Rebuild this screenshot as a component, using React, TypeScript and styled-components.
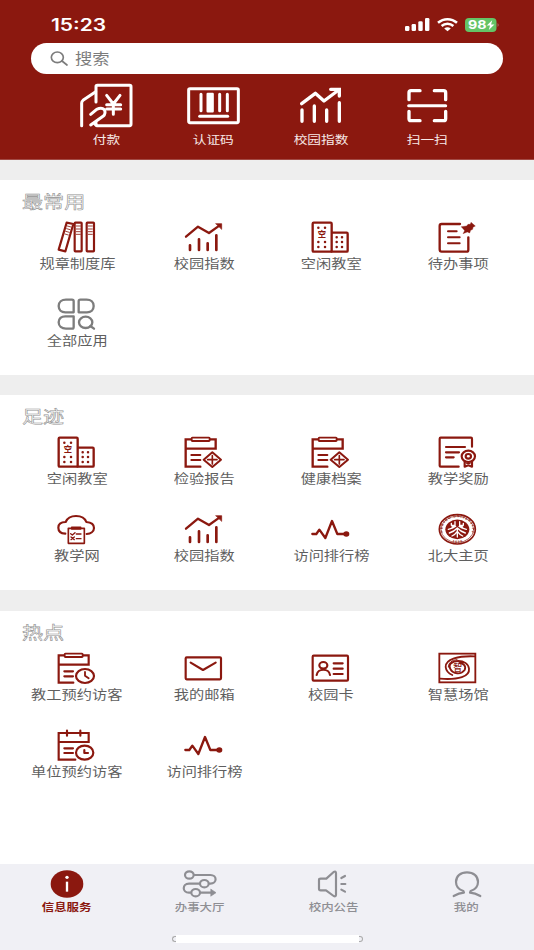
import React from 'react';
import styled, { createGlobalStyle } from 'styled-components';

const RED = '#8b180f';
const CJK = '"Noto Sans CJK SC", "Noto Sans", sans-serif';

const GlobalStyle = createGlobalStyle`
  body { margin: 0; background: #fff; font-family: ${CJK}; }
  * { box-sizing: border-box; }
`;

const Screen = styled.div`
  width: 534px;
  height: 950px;
  display: flex;
  flex-direction: column;
  background: #eeeeee;
  overflow: hidden;
`;

const Header = styled.header`
  height: 160px;
  flex: none;
  background: ${RED};
  border-bottom: 1px solid #a24a44;
`;

const StatusBar = styled.div`
  height: 43px;
  padding: 7px 36px 0 51px;
  display: flex;
  align-items: center;
  justify-content: space-between;
  color: #fff;
`;

const Clock = styled.span`
  display: inline-block;
  font: 600 16.8px/20px Inter, "Liberation Sans", sans-serif;
  transform: scaleX(1.25);
  transform-origin: left center;
`;

const StatusIcons = styled.div`
  display: flex;
  align-items: center;
  gap: 7px;
`;

const SearchBar = styled.div`
  height: 31px;
  margin: 0 31px 0 31px;
  padding-left: 19px;
  display: flex;
  align-items: center;
  gap: 7px;
  border-radius: 17px;
  background: #fff;
  color: #7c7c7c;
`;

const SearchText = styled.span`
  font-size: 14.5px;
  line-height: 20px;
  transform: scaleX(1.19);
  transform-origin: left center;
  margin-top: -1px;
`;

const QuickActions = styled.nav`
  display: grid;
  grid-template-columns: repeat(4, 107px);
  padding: 8px 0 0 53px;
`;

const QuickAction = styled.div`
  display: flex;
  flex-direction: column;
  align-items: center;
  color: #fff;
`;

const QuickLabel = styled.span`
  margin-top: 3px;
  font-size: 11.5px;
  line-height: 16px;
  transform: scaleX(1.19);
  white-space: nowrap;
  color: #f7e8e6;
`;

const Section = styled.section<{ $height: number; $gap?: number }>`
  height: ${(p) => p.$height}px;
  flex: none;
  margin-top: ${(p) => p.$gap ?? 20}px;
  background: #fff;
`;

const SectionTitle = styled.h2`
  height: 42px;
  margin: 0;
  padding: 9px 0 0 22px;
  font: 400 17.3px/24px ${CJK};
  color: #fff;
  -webkit-text-stroke: 0.55px #8f8f8f;

  span {
    display: inline-block;
    transform: scaleX(1.22);
    transform-origin: left center;
  }
`;

const AppGrid = styled.div`
  display: grid;
  grid-template-columns: repeat(4, 127px);
  grid-auto-rows: 77px;
  padding-left: 13.5px;
`;

const AppTile = styled.div<{ $muted?: boolean }>`
  display: flex;
  flex-direction: column;
  align-items: center;
  color: ${(p) => (p.$muted ? '#7d7d7d' : RED)};
`;

const AppLabel = styled.span`
  font-size: 12.6px;
  line-height: 18px;
  transform: scaleX(1.21);
  white-space: nowrap;
  color: #5f5f5f;
`;

const TabBar = styled.footer`
  flex: 1;
  display: flex;
  flex-direction: column;
  background: #f0f0f5;
`;

const Tabs = styled.div`
  display: grid;
  grid-template-columns: repeat(4, 133.3px);
  padding-top: 5px;
`;

const Tab = styled.div<{ $active?: boolean }>`
  display: flex;
  flex-direction: column;
  align-items: center;
  color: ${(p) => (p.$active ? RED : '#8e8e93')};
  font-weight: ${(p) => (p.$active ? 700 : 500)};
`;

const TabLabel = styled.span`
  font-size: 10.3px;
  line-height: 16px;
  transform: scaleX(1.21);
  white-space: nowrap;
`;

const HomeIndicator = styled.div`
  width: 191px;
  height: 8px;
  margin: 20px auto 0;
  display: flex;
  justify-content: space-between;
  align-items: center;
`;

const IndicatorBar = styled.div`
  flex: 1;
  height: 8px;
  background: #fff;
`;

const IndicatorEnd = styled.div<{ $right?: boolean }>`
  width: 4px;
  height: 6px;
  border: 1px solid #aaa;
  border-radius: ${(p) => (p.$right ? '0 4px 4px 0' : '4px 0 0 4px')};
  ${(p) => (p.$right ? 'border-left: 0;' : 'border-right: 0;')}
`;

const Svg = styled.svg`
  display: block;
  flex: none;
  overflow: visible;
  fill: none;
  stroke: currentColor;
  stroke-linecap: round;
  stroke-linejoin: round;
`;

const Glyph = styled.text`
  font-family: ${CJK};
  fill: currentColor;
  stroke: none;
  text-anchor: middle;
`;

/* App icons share a 114 x 96 grid shown at 38 x 32. */
const AppIcon = ({ children, w = 6 }: { children: React.ReactNode; w?: number }) => (
  <Svg width="38" height="32" viewBox="1 1 114 96" strokeWidth={w}>
    {children}
  </Svg>
);

const Books = () => (
  <AppIcon w={6.5}>
    <path d="M27 3 47 7 23 89 3 84Z" />
    <rect x="51" y="3" width="21" height="86" rx="2" />
    <rect x="87" y="3" width="22" height="86" rx="2" />
    <path d="M29 13 40 16M27 21 37 24M24 29 35 32M22 37 32 40M56 13H68M56 22H68M56 30H68M56 38H68M92 13H104M92 22H104M92 30H104M92 38H104" strokeWidth="2.5" />
  </AppIcon>
);

const Chart = () => (
  <AppIcon w={7}>
    <path d="M4 45 40 15 73 34 104 12" />
    <path d="M94 6H111V22Z" fill="currentColor" strokeWidth="2" />
    <path d="M16 71V85M43 53V85M69 65V85M95 41V85" strokeWidth="8" />
  </AppIcon>
);

const Building = () => (
  <AppIcon w={7}>
    <rect x="3" y="3" width="57" height="87" rx="3" />
    <path d="M62 33H105Q108 33 108 36V87Q108 90 105 90H60" />
    <path d="M20 18H20.1M40 18H40.1M20 61H20.1M40 61H40.1M20 76H20.1M40 76H40.1M75 47H75.1M91 47H91.1M75 61H75.1M91 61H91.1M75 76H75.1M91 76H91.1" strokeWidth="7.5" />
    <Glyph x="31" y="46" fontSize="25" fontWeight="700">空</Glyph>
  </AppIcon>
);

const Todo = () => (
  <AppIcon w={7}>
    <path d="M64 7H9Q3 7 3 13V83Q3 90 9 90H83Q89 90 89 84V47" />
    <path d="M28 29H54M28 47H63M28 65H63" strokeWidth="6" />
    <path d="M68 15 84 13 88 8 95 8 97 2 110 13 103 17 102 23 96 26 93 34 86 31 73 36 78 27Z" fill="currentColor" strokeWidth="1" />
  </AppIcon>
);

const AllApps = () => (
  <AppIcon w={7}>
    <path d="M48 41H23C11 41 3 33 3 22S12 3 25 3H43Q48 3 48 8ZM63 41V8Q63 3 68 3H87C100 3 108 11 108 22S100 41 88 41ZM48 53H23C11 53 3 60 3 71S12 90 25 90H43Q48 90 48 85Z" />
    <ellipse cx="84" cy="71" rx="20" ry="17" />
    <path d="m98 82 11 8" />
  </AppIcon>
);

const ClipBase = () => (
  <>
    <path d="M19 8H3V90H47M76 8H93V36H3" strokeLinejoin="miter" />
    <rect x="21" y="3" width="54" height="10" rx="2" strokeWidth="5.5" />
  </>
);

const Report = () => (
  <AppIcon w={7}>
    <ClipBase />
    <path d="M20 55H47M20 70H47" strokeWidth="6" />
    <path d="M83 47 109 69 83 91 57 69Z" strokeWidth="6" />
    <path d="M69 69H97M83 57V82" strokeWidth="5" />
  </AppIcon>
);

const Award = () => (
  <AppIcon w={6.5}>
    <path d="M100 30V6Q100 3 97 3H6Q3 3 3 6V87Q3 90 6 90H60" />
    <path d="M22 31H79M22 47H61M22 62H45" />
    <ellipse cx="89" cy="59" rx="20" ry="17" />
    <ellipse cx="89" cy="59" rx="8" ry="7" />
    <path d="M78 75V90L89 86 100 90V75" />
    <path d="M84 80H94" strokeWidth="4" />
  </AppIcon>
);

const Cloud = () => (
  <AppIcon>
    <path d="M23 60C10 59 2 52 2 42S10 25 24 25C29 13 40 7 55 7S82 14 86 25C100 26 109 33 109 43S99 60 87 61" strokeWidth="6.5" />
    <rect x="32" y="44" width="48" height="45" strokeWidth="5" />
    <path d="M42 41H69V46H42Z" strokeWidth="4.5" />
    <path d="m39 60 5 4 8-7M56 61H70M40 70 50 78M50 70 40 78M56 75H70" strokeWidth="4" />
  </AppIcon>
);

const Pulse = () => (
  <AppIcon>
    <path d="M2 61H14L23 48 41 73 61 22 77 61H101" strokeWidth="7" />
    <ellipse cx="104" cy="61" rx="6" ry="5" fill="currentColor" />
  </AppIcon>
);

const Seal = () => (
  <AppIcon w={3}>
    <defs>
      <path id="seal-top" d="M14 60C4 28 31 11 56 11S108 28 98 60" />
      <path id="seal-bottom" d="M26 78C43 91 69 91 86 78" />
    </defs>
    <ellipse cx="56" cy="47" rx="54" ry="44" strokeWidth="5" />
    <ellipse cx="56" cy="47" rx="49" ry="39.5" strokeWidth="2" />
    <ellipse cx="56" cy="47" rx="36" ry="29.5" fill="currentColor" stroke="none" />
    <g stroke="#fff" strokeWidth="4">
      <path d="M49 24V37L40 40M63 24V37L72 40M38 29V35H49M74 29V35H63M56 45V70M29 47Q45 43 51 38M83 47Q67 43 61 38M32 58Q47 53 56 43Q65 53 80 58M40 67Q50 62 56 53Q62 62 72 67" />
    </g>
    <Glyph fontSize="10.5" fontWeight="700">
      <textPath href="#seal-top" startOffset="50%" textLength="146">PEKING UNIVERSITY</textPath>
    </Glyph>
    <Glyph fontSize="10" fontWeight="700">
      <textPath href="#seal-bottom" startOffset="50%">1 8 9 8</textPath>
    </Glyph>
  </AppIcon>
);

const ClipClock = () => (
  <AppIcon w={6.5}>
    <ClipBase />
    <path d="M20 56H46M20 71H46" />
    <ellipse cx="82" cy="70" rx="27" ry="21" />
    <path d="M82 58V69L93 77" strokeWidth="5.5" />
  </AppIcon>
);

const CalendarClock = () => (
  <AppIcon w={6.5}>
    <path d="M53 90H3V10H93V37H3" strokeLinejoin="miter" />
    <path d="M28 3V18M68 3V18" />
    <path d="M20 56H46M20 70H46" />
    <ellipse cx="81" cy="69" rx="26" ry="21" />
    <path d="M80 61V70H91" />
  </AppIcon>
);

const Mail = () => (
  <AppIcon w={6.5}>
    <rect x="3" y="14" width="106" height="66" rx="3" />
    <path d="M18 30 55 52 93 30" />
  </AppIcon>
);

const IdCard = () => (
  <AppIcon w={6.5}>
    <rect x="3" y="9" width="106" height="75" rx="3" />
    <ellipse cx="35" cy="38" rx="12" ry="10" />
    <path d="M15 67C17 46 53 46 55 67" />
    <path d="M66 32H93M66 48H93M66 64H93" />
  </AppIcon>
);

const Venue = () => (
  <AppIcon w={5.5}>
    <rect x="2" y="3" width="108" height="86" strokeLinejoin="miter" />
    <path d="M108 11C60 9 20 19 21 43C22 53 29 62 41 67" />
    <path d="M4 78C60 82 94 72 91 48C89 33 75 25 59 25C38 25 27 38 35 49C43 64 67 67 78 52C83 41 75 31 62 31" />
    <path d="M29 43C29 31 39 22 55 21" strokeWidth="3" />
    <Glyph x="57" y="55" fontSize="27" fontWeight="500">智</Glyph>
  </AppIcon>
);

/* Quick action icons use a 159 x 138 grid shown at 53 x 46. */
const QuickIcon = ({ children, w = 9 }: { children: React.ReactNode; w?: number }) => (
  <Svg width="53" height="46" viewBox="0 0 159 138" strokeWidth={w}>
    {children}
  </Svg>
);

const Pay = () => (
  <QuickIcon>
    <path d="M48 60V14Q48 10 52 10H149Q153 10 153 14V126Q153 131 149 131H50L44 125" />
    <path d="M5 131V63Q5 58 9 55L47 29" />
    <path d="M32 97 50 82Q65 75 73 83Q79 94 69 103L32 129M48 120V129" />
    <path d="M80 40 100 66 120 40M100 66V97M80 68H122M80 81H122" />
  </QuickIcon>
);

const Code = () => (
  <QuickIcon>
    <rect x="5" y="20" width="149" height="102" rx="4" />
    <path d="M42 37V86M98 37V86M121 37V86" />
    <rect x="62" y="36" width="15" height="52" fill="currentColor" strokeWidth="7" />
    <path d="M38 103H122" />
  </QuickIcon>
);

const Index = () => (
  <QuickIcon w={10}>
    <path d="M23 65 64 34 90 57 134 24" />
    <path d="M110 22H136V42" strokeLinejoin="miter" />
    <path d="M24 84V118M61 72V118M98 84V118M136 62V118" />
  </QuickIcon>
);

const Scan = () => (
  <QuickIcon w={10}>
    <path d="M24 53V32Q24 26 30 26H57M100 26H128Q134 26 134 32V53M24 88V110Q24 116 30 116H57M100 116H128Q134 116 134 110V88" />
    <path d="M23 71H134" strokeWidth="9" />
  </QuickIcon>
);

const TabIcon = ({ children, w = 6.5 }: { children: React.ReactNode; w?: number }) => (
  <Svg width="34" height="30" viewBox="0 0 102 90" strokeWidth={w}>
    {children}
  </Svg>
);

const Info = () => (
  <TabIcon>
    <ellipse cx="51" cy="45" rx="49" ry="41" fill="currentColor" stroke="none" />
    <path d="M51 38V68" stroke="#fff" strokeWidth="7" strokeLinecap="butt" />
    <circle cx="51" cy="25" r="5" fill="#fff" stroke="none" />
  </TabIcon>
);

const Flow = () => (
  <TabIcon>
    <ellipse cx="19" cy="18" rx="13" ry="11" />
    <ellipse cx="64" cy="44" rx="13" ry="11" />
    <ellipse cx="38" cy="71" rx="13" ry="11" />
    <path d="M33 18H82C103 18 103 44 82 44H78M50 44H18C-3 44-3 71 18 71H24M52 71H85" />
    <path d="M84 61 99 71 84 81Z" fill="currentColor" strokeWidth="2" />
  </TabIcon>
);

const Speaker = () => (
  <TabIcon>
    <path d="M31 29H14Q9 29 9 33V59Q9 64 14 64H30L53 81Q60 84 60 77V13Q60 5 53 9Z" />
    <path d="M76 27 87 21M76 45H88M76 62 87 68" />
  </TabIcon>
);

const Person = () => (
  <TabIcon>
    <path d="M11 81Q27 72 42 71L40 66C25 61 18 50 18 39C18 21 32 10 51 10S84 21 84 39C84 50 77 61 62 66L60 71Q75 72 91 81" />
  </TabIcon>
);

const SignalIcon = () => (
  <Svg width="25" height="14" viewBox="0 0 25 14" strokeWidth="0">
    <g fill="#fff">
      <rect x="0" y="8" width="4.4" height="5" rx="1.3" />
      <rect x="6.6" y="6" width="4.4" height="7" rx="1.3" />
      <rect x="13.3" y="3.2" width="4.4" height="9.8" rx="1.3" />
      <rect x="20" y="0" width="4.4" height="13" rx="1.3" />
    </g>
  </Svg>
);

const WifiIcon = () => (
  <Svg width="21" height="14" viewBox="0 0 21 14" strokeWidth="2.5">
    <path d="M1 4.8C6.5-.1 14.5-.1 20 4.8M4.6 8C8 5 13 5 16.4 8" strokeLinecap="butt" />
    <path d="M7.2 10.4C9.2 8.7 11.8 8.7 13.8 10.4L10.5 13.2Z" fill="#fff" stroke="none" />
  </Svg>
);

const BatteryIcon = () => (
  <Svg width="33" height="14" viewBox="0 0 33 14" strokeWidth="0">
    <rect x="0" y="0" width="31.5" height="14" rx="4" fill="#64c466" />
    <path d="M32.5 5Q35 7 32.5 9Z" fill="#a9635e" />
    <text x="3" y="11.3" fontFamily="Inter, sans-serif" fontWeight="700" fontSize="12" textLength="18.5" lengthAdjust="spacingAndGlyphs" fill="#fff">98</text>
    <path d="M27.2 2.2 21.8 7.6H25L23.8 12 29.4 6.4H26.1Z" fill="#fff" />
  </Svg>
);

const SearchIcon = () => (
  <Svg width="18" height="15" viewBox="0 0 54 45" strokeWidth="5">
    <ellipse cx="22" cy="19" rx="18" ry="16" />
    <path d="m36 30 15 12" />
  </Svg>
);

type Item = { icon: React.FC; label: string; muted?: boolean };

const quick: Item[] = [
  { icon: Pay, label: '付款' },
  { icon: Code, label: '认证码' },
  { icon: Index, label: '校园指数' },
  { icon: Scan, label: '扫一扫' },
];

const sections: { title: string; height: number; gap?: number; items: Item[] }[] = [
  {
    title: '最常用',
    height: 195,
    items: [
      { icon: Books, label: '规章制度库' },
      { icon: Chart, label: '校园指数' },
      { icon: Building, label: '空闲教室' },
      { icon: Todo, label: '待办事项' },
      { icon: AllApps, label: '全部应用', muted: true },
    ],
  },
  {
    title: '足迹',
    height: 195,
    items: [
      { icon: Building, label: '空闲教室' },
      { icon: Report, label: '检验报告' },
      { icon: Report, label: '健康档案' },
      { icon: Award, label: '教学奖励' },
      { icon: Cloud, label: '教学网' },
      { icon: Chart, label: '校园指数' },
      { icon: Pulse, label: '访问排行榜' },
      { icon: Seal, label: '北大主页' },
    ],
  },
  {
    title: '热点',
    height: 253,
    gap: 21,
    items: [
      { icon: ClipClock, label: '教工预约访客' },
      { icon: Mail, label: '我的邮箱' },
      { icon: IdCard, label: '校园卡' },
      { icon: Venue, label: '智慧场馆' },
      { icon: CalendarClock, label: '单位预约访客' },
      { icon: Pulse, label: '访问排行榜' },
    ],
  },
];

const tabs: Item[] = [
  { icon: Info, label: '信息服务' },
  { icon: Flow, label: '办事大厅' },
  { icon: Speaker, label: '校内公告' },
  { icon: Person, label: '我的' },
];

export default function App() {
  return (
    <>
      <GlobalStyle />
      <Screen>
        <Header>
          <StatusBar>
            <Clock>15:23</Clock>
            <StatusIcons>
              <SignalIcon />
              <WifiIcon />
              <BatteryIcon />
            </StatusIcons>
          </StatusBar>
          <SearchBar>
            <SearchIcon />
            <SearchText>搜索</SearchText>
          </SearchBar>
          <QuickActions>
            {quick.map(({ icon: Icon, label }) => (
              <QuickAction key={label}>
                <Icon />
                <QuickLabel>{label}</QuickLabel>
              </QuickAction>
            ))}
          </QuickActions>
        </Header>
        {sections.map((s) => (
          <Section key={s.title} $height={s.height} $gap={s.gap}>
            <SectionTitle>
              <span>{s.title}</span>
            </SectionTitle>
            <AppGrid>
              {s.items.map(({ icon: Icon, label, muted }) => (
                <AppTile key={label} $muted={muted}>
                  <Icon />
                  <AppLabel>{label}</AppLabel>
                </AppTile>
              ))}
            </AppGrid>
          </Section>
        ))}
        <TabBar>
          <Tabs>
            {tabs.map(({ icon: Icon, label }, i) => (
              <Tab key={label} $active={i === 0}>
                <Icon />
                <TabLabel>{label}</TabLabel>
              </Tab>
            ))}
          </Tabs>
          <HomeIndicator>
            <IndicatorEnd />
            <IndicatorBar />
            <IndicatorEnd $right />
          </HomeIndicator>
        </TabBar>
      </Screen>
    </>
  );
}
